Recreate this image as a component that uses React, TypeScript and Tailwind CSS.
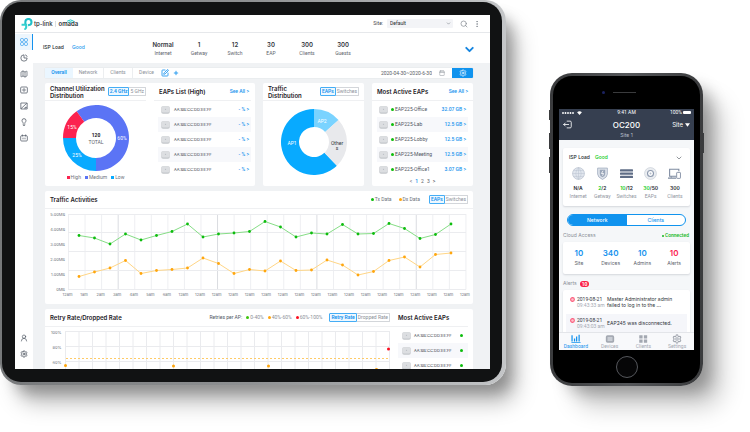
import React from "react";
import {
  Calendar,
  ChevronDown,
  EllipsisVertical,
  Lightbulb,
  Map as MapIcon,
  Plus,
  Search,
  Settings,
  SquarePen,
  UserRound,
} from "lucide-react";

const GREEN = [
  235.5, 238, 244, 234, 240, 235.5, 231.5, 224, 237, 234, 233, 231.5, 221.5, 227, 237, 233, 234,
  224.5, 234, 233.5, 223.5, 228.5, 238.5, 234.5, 224,
];
const ORANGE = [
  276.5, 272, 268, 260.5, 273.5, 270.5, 269.5, 268, 258, 263.5, 273.5, 269.5, 271, 261, 270.5, 270,
  260, 265, 275, 271.5, 260.5, 257, 267, 254.5, 253,
];
const HOURS = ["12am", "1am", "2am", "3am", "4am", "5am", "6am"];

function arc(cx: number, cy: number, r: number, inner: number, from: number, to: number) {
  const pt = (radius: number, deg: number) => {
    const a = ((deg - 90) * Math.PI) / 180;
    return `${(cx + radius * Math.cos(a)).toFixed(2)} ${(cy + radius * Math.sin(a)).toFixed(2)}`;
  };
  const large = to - from > 180 ? 1 : 0;
  return `M${pt(r, from)}A${r} ${r} 0 ${large} 1 ${pt(r, to)}L${pt(inner, to)}A${inner} ${inner} 0 ${large} 0 ${pt(inner, from)}Z`;
}

function TpMark() {
  return (
    <svg viewBox="0 0 22 22" className="size-[12px]" fill="none" stroke="#20bfc9" strokeWidth="3.8">
      <path d="M8 11V7.5A5.6 5.6 0 1 1 14 13H13" />
      <path d="M1 12.500h8.500V17a3.200 3.200 0 0 1-3.400 3.200" stroke="#35d0cf" />
    </svg>
  );
}

function Device() {
  return (
    <svg viewBox="0 0 18 16" className="h-[8px] w-[9px] shrink-0" aria-hidden="true">
      <rect x="0.5" y="0.5" width="17" height="15" rx="3.5" fill="#c3c6ca" />
      <rect x="0.5" y="0.5" width="17" height="12.5" rx="3.5" fill="#dcdee1" />
      <circle cx="9" cy="6.5" r="1.2" fill="#b4b8bd" />
    </svg>
  );
}

const SMALL = "font-['Roboto'] text-[5px]";

function Toggle({ on, off }: { on: string; off: string }) {
  return (
    <div className={`flex h-[9px] shrink-0 leading-[7px] whitespace-nowrap ${SMALL}`}>
      <button className="rounded-l-[1px] border border-[#45adf5] bg-[#eef8ff] px-px font-semibold text-[#1592ee]">{on}</button>
      <button className="rounded-r-[1px] border border-l-0 border-[#d3d6da] px-px text-[#8b9098]">{off}</button>
    </div>
  );
}

function Dot({ className }: { className: string }) {
  return <span className={`inline-block size-[3px] shrink-0 rounded-full ${className}`} />;
}

const TITLE = "text-[6px] leading-[7px] font-semibold whitespace-nowrap text-[#1d2126]";
const CARD = "rounded-[2px] bg-white";
const HEAD = "flex h-[18px] items-center justify-between border-b border-[#eff0f2]";
const LINK = "font-['Roboto'] text-[5px] font-medium text-[#1592ee]";

function TabletHeader() {
  return (
    <header className="flex h-[18px] items-center border-b border-[#e6e8eb] pr-[9px] pl-[6px]">
      <TpMark />
      <span className="ml-px text-[6px] leading-[8px] font-medium text-[#2b2f33]">tp-link</span>
      <span className="ml-[2px] h-[6px] w-px bg-[#dcdfe2]" />
      <span className="relative ml-[3px] text-[6px] leading-[8px] font-semibold text-[#2b2f33]">
        omada
        <svg viewBox="0 0 14 8" className="absolute -top-[1px] left-[8px] h-[4px] w-[7px]" fill="none" stroke="#18c4c4" strokeWidth="2" strokeLinecap="round">
          <path d="M1 4Q7-1 13 4M4 6.500q3-2.400 6 0" />
        </svg>
      </span>
      <label htmlFor="site" className={`ml-auto text-[#3f444b] ${SMALL}`}>Site:</label>
      <span className="relative ml-[4px] flex">
        <select id="site" className={`h-[9px] w-[66px] appearance-none rounded-[1px] bg-[#f3f4f7] px-[3px] leading-[9px] text-[#24282d] ${SMALL}`}>
          <option>Default</option>
        </select>
        <ChevronDown className="pointer-events-none absolute top-[2px] right-[2px] size-[5px] text-[#80868e]" strokeWidth={3} />
      </span>
      <button aria-label="Search" className="ml-[7px] text-[#7d838b]"><Search className="size-[8px]" strokeWidth={2} /></button>
      <button aria-label="More" className="ml-[5px] text-[#7d838b]"><EllipsisVertical className="size-[8px]" strokeWidth={2} /></button>
    </header>
  );
}

function Sidebar() {
  const cell = "flex h-[16px] w-full items-center justify-center";
  const svg = { viewBox: "0 0 24 24", className: "size-[8px]", fill: "none", stroke: "currentColor", strokeWidth: 2.2 };
  return (
    <nav className="flex w-[18px] shrink-0 flex-col bg-white pt-[1px] pb-[7px] text-[#4c5460]">
      <button aria-label="Dashboard" className="flex h-[16px] w-full items-center justify-center border-r border-[#1592ee] bg-[#edf6fd] text-[#2d9bee]">
        <svg {...svg}>
          {[6, 18].map((x) => [6, 18].map((y) => <rect key={`${x}${y}`} x={x - 4.5} y={y - 4.5} width="9" height="9" rx="3.5" />))}
        </svg>
      </button>
      <button aria-label="Statistics" className={cell}>
        <svg {...svg}><path d="M12 2.500a9.500 9.500 0 1 0 9.500 9.500H12z" strokeLinejoin="round" /><path d="M15.500 2.500q5 1 6 6" /></svg>
      </button>
      <button aria-label="Map" className={cell}><MapIcon className="size-[8px]" /></button>
      <button aria-label="Devices" className={cell}>
        <svg {...svg}><rect x="2" y="3" width="20" height="18" rx="3" /><circle cx="12" cy="12" r="3.500" /></svg>
      </button>
      <button aria-label="Insight" className={cell}>
        <svg {...svg}><path d="M2.500 3h19v18h-19zM3 20 20 4M15 21v-5h6" /></svg>
      </button>
      <button aria-label="Hints" className={cell}><Lightbulb className="size-[8px]" strokeWidth={2.3} /></button>
      <button aria-label="Log" className={cell}>
        <svg {...svg}><rect x="2" y="5" width="20" height="16" rx="3" /><path d="M7 1.500v6M17 1.500v6M9 11v5M15 11v5" /></svg>
      </button>
      <button aria-label="Account" className="mt-auto flex h-[16px] w-full items-center justify-center"><UserRound className="size-[8px]" /></button>
      <button aria-label="Settings" className={cell}><Settings className="size-[8px]" strokeWidth={2.3} /></button>
    </nav>
  );
}

function StatusBar() {
  const stats = [
    ["Normal", "Internet"],
    ["1", "Getway"],
    ["12", "Switch"],
    ["30", "EAP"],
    ["300", "Clients"],
    ["300", "Guests"],
  ];
  return (
    <section className="flex h-[30px] items-center bg-white pr-[14px] pl-[10px]">
      <span className="w-[29px] text-[5px] font-medium text-[#24282d]">ISP Load</span>
      <span className="w-[73px] text-[5px] font-medium text-[#2d9bee]">Good</span>
      <dl className="flex">
        {stats.map(([value, label]) => (
          <div key={label} className="flex w-[36px] flex-col-reverse items-center">
            <dt className={`leading-[8px] text-[#5d636b] ${SMALL}`}>{label}</dt>
            <dd className="text-[6px] leading-[9px] font-semibold text-[#30353b]">{value}</dd>
          </div>
        ))}
      </dl>
      <button aria-label="Expand" className="ml-auto pt-[3px] text-[#1585e0]"><ChevronDown className="size-[13px]" strokeWidth={3.5} /></button>
    </section>
  );
}

function FilterBar() {
  return (
    <section className={`flex h-[10px] items-center rounded-[1px] bg-white text-[#8b9098] shadow-[0_0_1px_#b9bec4] ${SMALL}`}>
      <button className="h-full w-[28px] bg-[#eaf6ff] font-semibold text-[#1592ee]">Overall</button>
      <button className="h-full w-[31px] border-r border-[#eceef0]">Network</button>
      <button className="h-full w-[29px] border-r border-[#eceef0]">Clients</button>
      <button className="h-full w-[27px]">Device</button>
      <button aria-label="Edit" className="ml-[1px] text-[#1592ee]"><SquarePen className="size-[8px]" strokeWidth={2.5} /></button>
      <button aria-label="Add" className="ml-[4px] text-[#1592ee]"><Plus className="size-[6px]" strokeWidth={3.5} /></button>
      <input aria-label="Date range" defaultValue="2020-04-30~2020-6-30" className="ml-auto w-[60px] text-right leading-[8px] text-[#555b63]" />
      <Calendar className="mx-[7px] size-[6px]" />
      <button aria-label="Dashboard settings" className="flex h-full w-[21px] items-center justify-center rounded-r-[1px] bg-[#1093ee] text-white">
        <Settings className="size-[8px]" />
      </button>
    </section>
  );
}

function Utilization() {
  return (
    <section className={`${CARD} grid grid-cols-[101fr_109fr]`}>
      <div>
        <div className={`${HEAD} pl-[5px]`}>
          <h2 className={TITLE}>Channel Utilization<br />Distribution</h2>
          <Toggle on="2.4 GHz" off="5 GHz" />
        </div>
        <svg viewBox="0 0 66 66" className="mx-auto mt-[4px] size-[66px]" role="img" aria-label="Channel utilization">
          <path d={arc(33, 33, 33, 20, -36, 180)} fill="#5b74f5" />
          <path d={arc(33, 33, 33, 20, 180, 270)} fill="#08aaff" />
          <path d={arc(33, 33, 33, 20, 270, 324)} fill="#fb2350" />
          <g textAnchor="middle" fontSize="5" fontFamily="Roboto" fill="#fff">
            <text x="9" y="24">15%</text>
            <text x="14" y="52">25%</text>
            <text x="59" y="35">60%</text>
            <text x="33" y="32" fill="#1d2126" fontWeight="700">120</text>
            <text x="33" y="39" fill="#5d636b">TOTAL</text>
          </g>
        </svg>
        <ul className={`mt-[4px] flex justify-center gap-[4px] leading-[5px] text-[#6d737b] ${SMALL}`}>
          <li className="flex items-center gap-[1px]"><span className="size-[3px] bg-[#fb2350]" />High</li>
          <li className="flex items-center gap-[1px]"><span className="size-[3px] bg-[#5b74f5]" />Medium</li>
          <li className="flex items-center gap-[1px]"><span className="size-[3px] bg-[#08aaff]" />Low</li>
        </ul>
      </div>
      <div className="pr-[4px] pl-[8px]">
        <div className={`${HEAD} pr-[2px] pl-[5px]`}>
          <h2 className={TITLE}>EAPs List (High)</h2>
          <a href="#eaps" className={LINK}>See All &gt;</a>
        </div>
        <ul className="mt-[1px] ml-[4px]">
          {[0, 1, 2, 3, 4].map((i) => (
            <li key={i} className="flex h-[15px] items-center gap-[4px] pr-[2px] pl-[3px] text-[4px] text-[#3b424b] even:bg-[#f7f8fb]">
              <Device />
              <span>AA:BB:CC:DD:EE:FF</span>
              <span className={`ml-auto ${LINK}`}>- % &gt;</span>
            </li>
          ))}
        </ul>
      </div>
    </section>
  );
}

function Distribution() {
  return (
    <section className={CARD}>
      <div className={`${HEAD} px-[5px]`}>
        <h2 className={TITLE}>Traffic<br />Distribution</h2>
        <Toggle on="EAPs" off="Switches" />
      </div>
      <svg viewBox="0 0 66 66" className="mx-auto mt-[8px] size-[66px]" role="img" aria-label="Traffic distribution">
        <path d={arc(33, 33, 33, 15, 136, 360)} fill="#08aaff" />
        <path d={arc(33, 33, 33, 15, 0, 48)} fill="#7ad3ff" />
        <path d={arc(33, 33, 33, 15, 48, 136)} fill="#e8e9ec" />
        <g textAnchor="middle" fontSize="5" fontFamily="Roboto" fill="#fff">
          <text x="11" y="35.500">AP1</text>
          <text x="41" y="13.500">AP2</text>
          <text x="56" y="35.500" fill="#30353b">Other</text>
          <text x="56" y="41" fill="#30353b">s</text>
        </g>
      </svg>
    </section>
  );
}

function ActiveEaps() {
  const rows = [
    ["EAP225-Office", "32.07 GB"],
    ["EAP225-Lab", "12.5 GB"],
    ["EAP225-Lobby", "12.5 GB"],
    ["EAP225-Meeting", "12.5 GB"],
    ["EAP225-Office1", "3.07 GB"],
  ];
  return (
    <section className={CARD}>
      <div className={`${HEAD} px-[5px]`}>
        <h2 className={TITLE}>Most Active EAPs</h2>
        <a href="#active" className={LINK}>See All &gt;</a>
      </div>
      <ul className="mx-[5px] mt-[1px]">
        {rows.map(([name, size]) => (
          <li key={name} className={`flex h-[15px] items-center px-[2px] whitespace-nowrap text-[#4f565f] even:bg-[#f7f8fb] ${SMALL}`}>
            <Device />
            <Dot className="mr-[1px] ml-[3px] bg-[#0dbd0d]" />
            <span>{name}</span>
            <span className="ml-auto font-medium text-[#1592ee]">{size} &gt;</span>
          </li>
        ))}
      </ul>
      <div className={`flex h-[9px] items-center justify-center gap-[3px] leading-[5px] text-[#5d636b] ${SMALL}`}>
        <button>&lt;</button>
        <button className="font-semibold text-[#1592ee]">1</button>
        <button>2</button>
        <button>3</button>
        <button className="font-semibold">&gt;</button>
      </div>
    </section>
  );
}

function Series({ values, line, dot }: { values: number[]; line: string; dot: string }) {
  const pts = values.map((y, i) => [79 + i * 15.5, y]);
  return (
    <g>
      <polyline points={pts.map((p) => p.join(",")).join(" ")} fill="none" stroke={line} strokeWidth="1" />
      {pts.map(([x, y]) => <circle key={x} cx={x} cy={y} r="1.4" fill={dot} />)}
    </g>
  );
}

function Activities() {
  return (
    <section className={CARD}>
      <div className={`${HEAD} px-[5px]`}>
        <h2 className={TITLE}>Traffic Activities</h2>
        <div className={`flex items-center gap-[1px] text-[#6d737b] ${SMALL}`}>
          <Dot className="bg-[#0dbd0d]" />Tx Data
          <Dot className="ml-[6px] bg-[#ffa60d]" />Dx Data
          <span className="ml-[8px]"><Toggle on="EAPs" off="Switches" /></span>
        </div>
      </div>
      <svg viewBox="45 209 428 95" className="block w-full" role="img" aria-label="Traffic by hour">
        {Array.from({ length: 25 }, (_, i) => (
          <line key={i} x1={68.5 + i * 16.56} x2={68.5 + i * 16.56} y1="214" y2="289.500" stroke={i % 6 === 3 ? "#dadce1" : "#eeeff2"} />
        ))}
        {[214.5, 232.5, 251.5, 270.5, 289.5].map((y) => <line key={y} x1="68" x2="466" y1={y} y2={y} stroke="#ebecef" />)}
        <g fontSize="4" fill="#6d737b">
          {["5.00MB", "4.00MB", "3.00MB", "2.00MB", "1.00MB", "0MB"].map((t, i) => (
            <text key={t} x="65" y={215.5 + i * 15} textAnchor="end">{t}</text>
          ))}
          {Array.from({ length: 25 }, (_, i) => (
            <text key={i} x={67.5 + i * 16.56} y="296" textAnchor="middle">{HOURS[i] ?? "12am"}</text>
          ))}
        </g>
        <Series values={GREEN} line="#86dd86" dot="#0dbd0d" />
        <Series values={ORANGE} line="#ffd686" dot="#ffa60d" />
      </svg>
    </section>
  );
}

function RetryRate() {
  return (
    <section className="grid grid-cols-[345fr_83fr] rounded-t-[2px] bg-white">
      <div>
        <div className={`${HEAD} pl-[5px]`}>
          <h2 className={TITLE}>Retry Rate/Dropped Rate</h2>
          <div className={`flex items-center gap-[1px] whitespace-nowrap text-[#8b9098] ${SMALL}`}>
            <span className="mr-[3px] text-[#4f565f]">Retries per AP:</span>
            <Dot className="bg-[#3cc40d]" />0-40%
            <Dot className="ml-[3px] bg-[#ffa60d]" />40%-60%
            <Dot className="ml-[3px] bg-[#fb0d20]" />60%-100%
            <span className="ml-[6px]"><Toggle on="Retry Rate" off="Dropped Rate" /></span>
          </div>
        </div>
        <svg viewBox="45 327 345 42" className="block w-full overflow-hidden" role="img" aria-label="Retry rate">
          {Array.from({ length: 25 }, (_, i) => (
            <line key={i} x1={65.5 + i * 13.5} x2={65.5 + i * 13.5} y1="331" y2="369" stroke="#eaebee" />
          ))}
          {[331.5, 346.5, 361.5].map((y) => <line key={y} x1="65" x2="390" y1={y} y2={y} stroke="#eaebee" />)}
          <line x1="66" x2="390" y1="358.500" y2="358.500" stroke="#ffcb66" strokeDasharray="2 2" />
          <g fontSize="4" fill="#6d737b" textAnchor="end">
            <text x="61.500" y="333.500">100%</text>
            <text x="61.500" y="348.500">80%</text>
            <text x="61.500" y="363.500">60%</text>
          </g>
          {[[65.5, 365.5], [173.5, 366], [268.5, 366], [376.5, 369.5]].map(([x, y]) => <circle key={x} cx={x} cy={y} r="1.500" fill="#ffa60d" />)}
          <circle cx="388.500" cy="349" r="1.500" fill="#fb0d20" />
        </svg>
      </div>
      <div className="pr-[5px]">
        <div className={`${HEAD} pl-[8px]`}>
          <h2 className={TITLE}>Most Active EAPs</h2>
        </div>
        <ul className="mt-[1px] ml-[8px] h-[41px] overflow-hidden">
          {[0, 1, 2].map((i) => (
            <li key={i} className="flex h-[15px] items-center gap-[3px] pr-[5px] pl-[4px] text-[4px] text-[#3b424b] even:bg-[#f7f8fb]">
              <Device />
              <span>AA:BB:CC:DD:EE:FF</span>
              <Dot className="ml-auto bg-[#0dbd0d]" />
            </li>
          ))}
        </ul>
      </div>
    </section>
  );
}

function Tablet() {
  return (
    <div className="min-w-0 flex-1 rounded-[21px] bg-linear-to-r from-[#77797b] via-[#8f9193] to-[#c4c6c8] pt-[2px] pr-[4px] pb-[3px] pl-[2px] shadow-[14px_22px_22px_-4px_rgba(0,0,0,0.26),10px_12px_14px_-4px_rgba(0,0,0,0.26)]">
      <div className="rounded-[19px] bg-[#111213] pt-[13px] pr-[12px] pb-[13px] pl-[13px]">
        <div className="bg-white">
          <TabletHeader />
          <div className="flex">
            <Sidebar />
            <main className="min-w-0 flex-1 bg-[#f0f2f4]">
              <StatusBar />
              <div className="flex flex-col gap-[5px] pt-[5px] pr-[17px] pl-[12px]">
                <FilterBar />
                <div className="grid grid-cols-[210fr_101fr_101fr] gap-[8px]">
                  <Utilization />
                  <Distribution />
                  <ActiveEaps />
                </div>
                <Activities />
                <RetryRate />
              </div>
            </main>
          </div>
        </div>
      </div>
    </div>
  );
}

function PhoneStats() {
  const stroke = { fill: "none", stroke: "#7d8aa0", strokeWidth: 1.6 };
  const items = [
    { ok: "", rest: "N/A", label: "Internet", icon: <g><circle cx="12" cy="12" r="11" fill="#e1e6ee" stroke="#a9b3c3" /><path d="M1 12h22M12 1v22M3 6.500h18M3 17.500h18M12 1q-10 11 0 22M12 1q10 11 0 22" fill="none" stroke="#bcc5d3" /></g> },
    { ok: "2", rest: "/2", label: "Getway", icon: <g><path d="M3 2h18v11q0 6-9 10-9-4-9-10z" fill="#dde2ea" stroke="#a3aec0" strokeWidth="1.500" /><path d="M7 5h10v8q0 4-5 6-5-2-5-6z" fill="#9aa6b9" /><path d="m13 7-3 5h4l-2 4" stroke="#fff" strokeWidth="1.500" fill="none" /></g> },
    { ok: "10", rest: "/12", label: "Switches", icon: <g fill="#5f6d86"><rect x="0" y="4" width="24" height="4.500" rx="1" /><rect x="0" y="10" width="24" height="4.500" rx="1" /><rect x="0" y="16" width="24" height="4.500" rx="1" /></g> },
    { ok: "30", rest: "/50", label: "EAPs", icon: <g><circle cx="12" cy="12" r="11" fill="#e9ecf0" stroke="#c0c7d1" /><circle cx="12" cy="12" r="5.500" fill="#fff" stroke="#8b98ad" strokeWidth="2" /><circle cx="12" cy="12" r="1.800" fill="#b4bdca" /></g> },
    { ok: "", rest: "300", label: "Clients", icon: <g {...stroke}><path d="M16 17H3V4h17v4M0 20.500h15" strokeWidth="2" /><rect x="16" y="10" width="7" height="11" rx="1" fill="#fff" /><path d="M6 17v3" /></g> },
  ];
  return (
    <section className="rounded-[2px] bg-white px-[3px] pt-[5px] pb-[5px] shadow-[0_1px_2px_rgba(40,50,70,0.16)]">
      <div className="flex h-[10px] items-center pr-[4px] pl-[3px] text-[5px] font-medium text-[#24282d]">
        ISP Load<span className="ml-[5px] text-[#10cc20]">Good</span>
        <button aria-label="Expand" className="ml-auto text-[#5d636b]"><ChevronDown className="size-[8px]" strokeWidth={2} /></button>
      </div>
      <dl className="mt-[4px] grid grid-cols-5">
        {items.map((it) => (
          <div key={it.label} className="flex flex-col items-center">
            <svg viewBox="0 0 24 24" className="size-[13px]" aria-hidden="true">{it.icon}</svg>
            <dt className={`order-last leading-[9px] text-[#9095a0] ${SMALL}`}>{it.label}</dt>
            <dd className="mt-[4px] text-[5px] leading-[8px] font-semibold text-[#24282d]"><span className="text-[#10cc20]">{it.ok}</span>{it.rest}</dd>
          </div>
        ))}
      </dl>
    </section>
  );
}

function AlertRow({ date, time, text, className }: { date: string; time: string; text: React.ReactNode; className: string }) {
  return (
    <li className={`flex items-center pl-[4px] text-[5px] leading-[6px] text-[#30353b] ${className}`}>
      <svg viewBox="0 0 12 12" className="mb-[6px] size-[5px] shrink-0"><circle cx="6" cy="6" r="4.500" fill="#ffc0cc" stroke="#fb5a7a" strokeWidth="2.500" /></svg>
      <span className="ml-[2px] w-[30px] shrink-0 font-['Roboto'] whitespace-nowrap">{date}<br /><span className="text-[#a4a9b3]">{time}</span></span>
      <span className="whitespace-nowrap">{text}</span>
    </li>
  );
}

function PhoneNav() {
  const tab = "flex flex-col items-center leading-[5px] font-['Roboto'] text-[5px]";
  const s = { viewBox: "0 0 24 24", className: "size-[10px]", fill: "currentColor" };
  return (
    <nav className="grid h-[18px] grid-cols-4 border-t border-[#e3e5e9] bg-[#f8f9fb] pt-[1px] text-[#a3a8b1]">
      <button className={`${tab} text-[#1592ee]`}>
        <svg {...s}><path d="M1 3h3v15H1zM7 11h3v7H7zM12 6h3v12h-3zM18 2h3v16h-3zM1 19h22v2H1z" /></svg>Dashboard
      </button>
      <button className={tab}>
        <svg {...s}><rect x="2" y="3" width="20" height="18" rx="4" /><rect x="6" y="7" width="12" height="10" fill="#c9cdd4" /></svg>Devices
      </button>
      <button className={tab}>
        <svg {...s}><path d="M3 3h8v8H3zM14 3h8v8h-8zM3 13h8v8H3zM14 13h8v8h-8z" /></svg>Clients
      </button>
      <button className={tab}>
        <Settings className="size-[10px]" strokeWidth={2.5} />Settings
      </button>
    </nav>
  );
}

function Phone() {
  const totals = [
    ["10", "Site"],
    ["340", "Devices"],
    ["10", "Admins"],
    ["10", "Alerts"],
  ];
  return (
    <div className="relative mt-[73px] w-[153px] shrink-0 rounded-[22px] bg-linear-to-r from-[#3a3b3d] via-[#55575a] to-[#3a3b3d] p-[3px] shadow-[22px_24px_24px_-4px_rgba(0,0,0,0.22),12px_10px_16px_-4px_rgba(0,0,0,0.28)]">
      <span className="absolute top-[37px] -left-px h-[10px] w-px bg-[#3a3b3d]" />
      <span className="absolute top-[60px] -left-px h-[16px] w-px bg-[#3a3b3d]" />
      <span className="absolute top-[84px] -left-px h-[16px] w-px bg-[#3a3b3d]" />
      <span className="absolute top-[60px] -right-px h-[20px] w-px bg-[#3a3b3d]" />
      <div className="rounded-[19px] bg-black px-[6px]">
        <div className="flex h-[33px] items-center justify-center gap-[8px] pr-[15px]">
          <span className="size-[3px] rounded-full bg-[#1b2260]" />
          <span className="h-px w-[23px] bg-[#3a3b3d]" />
        </div>
        <div className="bg-[#f5f7f9]">
          <header className="bg-[#363f50] text-white">
            <div className={`grid h-[7px] grid-cols-3 items-center px-[3px] leading-[7px] ${SMALL}`}>
              <span className="flex items-center gap-[3px]">
                <svg viewBox="0 0 24 4" className="h-[2px] w-[12px]" fill="#fff">{[2, 7, 12, 17, 22].map((x) => <circle key={x} cx={x} cy="2" r="1.900" />)}</svg>
                <svg viewBox="0 0 12 10" className="h-[4px] w-[5px]" fill="#fff"><path d="M0 3q6-5 12 0L6 10z" /></svg>
              </span>
              <span className="text-center">9:41 AM</span>
              <span className="flex items-center justify-end gap-[1px]">100%<span className="h-[3px] w-[8px] rounded-[1px] bg-white" /></span>
            </div>
            <div className="grid h-[17px] grid-cols-3 items-center px-[4px]">
              <button aria-label="Log out">
                <svg viewBox="0 0 24 24" className="size-[9px]" fill="none" stroke="#fff" strokeWidth="2.200" strokeLinecap="round"><path d="M11 3h8q3 0 3 3v12q0 3-3 3h-8M15 12H2M6 8l-4 4 4 4" /></svg>
              </button>
              <h1 className="text-center text-[8px] leading-[10px] font-medium">OC200</h1>
              <button className="flex items-center justify-end gap-[2px] text-[6px] leading-[8px]">
                Site<svg viewBox="0 0 10 7" className="h-[4px] w-[5px]" fill="#fff"><path d="M0 0h10L5 7z" /></svg>
              </button>
            </div>
            <p className="pb-[3px] text-center text-[5px] leading-[4px] text-[#b9bfca]">Site 1</p>
          </header>
          <div className="px-[4px] pt-[8px]">
            <PhoneStats />
            <div className="mx-[4px] mt-[8px] grid h-[12px] grid-cols-2 overflow-hidden rounded-full border border-[#1093ee] bg-white text-[5px] leading-[10px] font-medium">
              <button className="bg-[#1093ee] text-white">Network</button>
              <button className="text-[#1592ee]">Clients</button>
            </div>
            <div className="flex h-[16px] items-center justify-between pt-[3px] pr-[1px] text-[5px] text-[#8b9098]">
              Cloud Access
              <span className="flex items-center gap-[1px] font-['Roboto'] font-medium text-[#10b820]"><span className="size-[2px] rounded-full bg-[#10b820]" />Connected</span>
            </div>
            <dl className="grid grid-cols-4 rounded-[2px] bg-white py-[6px] shadow-[0_1px_2px_rgba(40,50,70,0.16)]">
              {totals.map(([n, label]) => (
                <div key={label} className="group flex flex-col-reverse items-center">
                  <dt className="text-[5px] leading-[9px] text-[#5d636b]">{label}</dt>
                  <dd className="text-[8px] leading-[11px] font-semibold text-[#1592ee] group-last:text-[#fb2350]">{n}</dd>
                </div>
              ))}
            </dl>
            <div className="flex h-[16px] items-center gap-[3px] pt-[4px] text-[5px] text-[#8b9098]">
              Alerts<span className="rounded-full bg-[#fb1f45] px-[2px] font-['Roboto'] leading-[6px] font-semibold text-white">10</span>
            </div>
            <ul className="rounded-t-[2px] bg-white px-[3px] shadow-[0_1px_2px_rgba(40,50,70,0.16)]">
              <AlertRow className="h-[24px]" date="2019-08-21" time="09:43:33 am" text={<>Master Administrator admin<br />failed to log in to the ...</>} />
              <AlertRow className="h-[18px] bg-[#f5f6fa]" date="2019-08-21" time="09:43:03 am" text="EAP245 was disconnected." />
            </ul>
          </div>
          <PhoneNav />
        </div>
        <div className="flex h-[33px] items-center justify-center">
          <button aria-label="Home" className="size-[22px] rounded-full border border-[#55575c] bg-[#060607]" />
        </div>
      </div>
    </div>
  );
}

export default function App() {
  return (
    <div className="flex min-h-screen items-start gap-[44px] overflow-hidden bg-white pr-[47px] font-['Inter','Noto_Sans',sans-serif]">
      <Tablet />
      <Phone />
    </div>
  );
}
